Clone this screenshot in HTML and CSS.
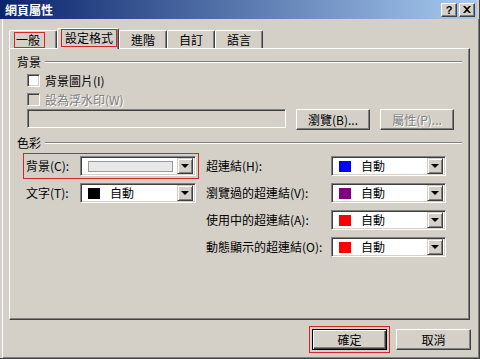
FILE: index.html
```html
<!DOCTYPE html>
<html lang="zh-Hant">
<head>
    <meta charset="UTF-8">
    <title>網頁屬性</title>
    <link rel="stylesheet" href="styles.css">
</head>
<body>
    <div class="window">
        <div class="titlebar">
            <span class="title">網頁屬性</span>
            <div class="caption-buttons">
                <span class="caption-btn">?</span>
                <span class="caption-btn">
                    <svg width="8" height="7" viewBox="0 0 8 7"><path d="M0 0h2l2 2 2-2h2L5 3.5 8 7H6L4 5 2 7H0l3-3.5z" fill="#000"/></svg>
                </span>
            </div>
        </div>

        <div class="frame">
            <!-- Tabs -->
            <div class="tabs">
                <div class="tab tab-first"><span class="mark">一般</span></div>
                <div class="tab active"><span class="mark">設定格式</span></div>
                <div class="tab">進階</div>
                <div class="tab">自訂</div>
                <div class="tab">語言</div>
            </div>

            <div class="panel">
                <div class="group-title"><span>背景</span><span class="rule"></span></div>
                <div class="check"><span class="box"></span>背景圖片(I)</div>
                <div class="check disabled"><span class="box"></span>設為浮水印(W)</div>
                <div class="file-row">
                    <div class="field"></div>
                    <span class="btn">瀏覽(B)...</span>
                    <span class="btn disabled">屬性(P)...</span>
                </div>

                <div class="group-title"><span>色彩</span><span class="rule"></span></div>
                <div class="colors">
                    <div class="col col-left">
                        <div class="row marked">
                            <span class="label">背景(C):</span>
                            <div class="combo"><span class="bar"></span><span class="drop"></span></div>
                        </div>
                        <div class="row">
                            <span class="label">文字(T):</span>
                            <div class="combo"><span class="swatch black"></span><span class="value">自動</span><span class="drop"></span></div>
                        </div>
                    </div>
                    <div class="col col-right">
                        <div class="row">
                            <span class="label">超連結(H):</span>
                            <div class="combo"><span class="swatch blue"></span><span class="value">自動</span><span class="drop"></span></div>
                        </div>
                        <div class="row">
                            <span class="label">瀏覽過的超連結(V):</span>
                            <div class="combo"><span class="swatch purple"></span><span class="value">自動</span><span class="drop"></span></div>
                        </div>
                        <div class="row">
                            <span class="label">使用中的超連結(A):</span>
                            <div class="combo"><span class="swatch red"></span><span class="value">自動</span><span class="drop"></span></div>
                        </div>
                        <div class="row">
                            <span class="label">動態顯示的超連結(O):</span>
                            <div class="combo"><span class="swatch red"></span><span class="value">自動</span><span class="drop"></span></div>
                        </div>
                    </div>
                </div>
            </div>

            <div class="actions">
                <span class="btn default marked">確定</span>
                <span class="btn">取消</span>
            </div>
        </div>
    </div>
</body>
</html>
```

FILE: styles.css
```css
body {
    margin: 0;
    font-family: "Noto Sans CJK TC", sans-serif;
    font-size: 12px;
    line-height: 14px;
    color: #000;
    background-color: #d4d0c8;
}

.window {
    width: 480px;
    height: 359px;
    box-sizing: border-box;
    display: flex;
    flex-direction: column;
    border-right: 1px solid #404040;
    border-bottom: 1px solid #404040;
}

/* Title bar */
.titlebar {
    height: 19px;
    margin-right: 2px;
    flex-shrink: 0;
    display: flex;
    align-items: center;
    justify-content: space-between;
    padding: 0 2px 0 5px;
    background: linear-gradient(to right, #0a246a, #a6caf0);
    color: #fff;
    font-weight: bold;
}

.caption-buttons {
    display: flex;
    gap: 2px;
}

.caption-btn {
    width: 16px;
    height: 14px;
    box-sizing: border-box;
    display: flex;
    align-items: center;
    justify-content: center;
    background-color: #d4d0c8;
    border: 1px solid;
    border-color: #fff #404040 #404040 #fff;
    box-shadow: inset -1px -1px #808080;
    color: #000;
    font-family: "Liberation Sans", sans-serif;
    font-size: 11px;
    font-weight: bold;
}

.frame {
    flex: 1;
    padding: 0 2px 0 3px;
    box-shadow: inset 2px 0 #d4d0c8, inset 3px 0 #fff, inset -1px -1px #808080;
}

/* Tabs */
.tabs {
    display: flex;
    align-items: flex-end;
    height: 20px;
    margin: 9px 0 0 6px;
}

.tab {
    height: 18px;
    box-sizing: border-box;
    display: flex;
    align-items: center;
    padding: 0 11px;
    border: 1px solid;
    border-color: #fff #404040 transparent #fff;
    border-bottom: none;
    border-radius: 2px 2px 0 0;
    box-shadow: inset -1px 0 #808080;
}

.tab-first {
    padding: 1px 11px 0 4px;
}

.tab.active {
    position: relative;
    z-index: 1;
    height: 21px;
    margin-bottom: -1px;
    padding: 0 1px 2px 3px;
    background-color: #d4d0c8;
}

.mark {
    border: 1px solid #d02828;
    padding: 0 4px 0 1px;
}

.tab.active .mark {
    padding: 1px 3px;
}

/* Panel */
.panel {
    height: 272px;
    box-sizing: border-box;
    margin: 0 7px 0 6px;
    padding: 6px 7px 0 7px;
    border: 1px solid;
    border-color: #fff #404040 #404040 #fff;
    box-shadow: inset -1px -1px #808080;
}

.group-title {
    display: flex;
    align-items: center;
    gap: 4px;
    height: 14px;
}

.rule {
    flex: 1;
    border-top: 1px solid #808080;
    border-bottom: 1px solid #fff;
}

.check {
    display: flex;
    align-items: center;
    gap: 5px;
    height: 13px;
    margin: 5px 0 0 10px;
}

.check.disabled {
    margin-top: 6px;
}

.box {
    width: 13px;
    height: 13px;
    box-sizing: border-box;
    border: 1px solid;
    border-color: #808080 #fff #fff #808080;
    box-shadow: inset 1px 1px #404040, inset -1px -1px #d4d0c8;
    background-color: #fff;
}

.disabled {
    color: #808080;
    text-shadow: 1px 1px #fff;
}

.check.disabled .box {
    background-color: #d4d0c8;
}

.file-row {
    display: flex;
    align-items: flex-start;
    gap: 10px;
    margin: 3px 0 0 10px;
}

.field {
    width: 259px;
    height: 19px;
    box-sizing: border-box;
    border: 1px solid;
    border-color: #808080 #fff #fff #808080;
    box-shadow: inset 1px 1px #404040, inset -1px -1px #d4d0c8;
}

.btn {
    width: 74px;
    height: 21px;
    box-sizing: border-box;
    display: flex;
    align-items: center;
    justify-content: center;
    border: 1px solid;
    border-color: #fff #404040 #404040 #fff;
    box-shadow: inset -1px -1px #808080;
    background-color: #d4d0c8;
}

.file-row .group-title {
    margin-top: 6px;
}

.file-row + .group-title {
    margin-top: 6px;
}

/* Colour rows */
.colors {
    display: flex;
    margin: 6px 0 0 9px;
}

.col {
    display: flex;
    flex-direction: column;
    gap: 7px;
}

.col-right {
    margin-left: 10px;
}

.row {
    display: flex;
    align-items: center;
    height: 20px;
}

.row.marked {
    outline: 1px solid #d02828;
    outline-offset: 2px;
}

.col-left .label {
    width: 54px;
}

.col-right .label {
    width: 125px;
}

.combo {
    width: 116px;
    height: 20px;
    box-sizing: border-box;
    display: flex;
    align-items: center;
    padding: 2px;
    border: 1px solid;
    border-color: #808080 #fff #fff #808080;
    box-shadow: inset 1px 1px #404040, inset -1px -1px #d4d0c8;
    background-color: #fff;
}

.col-right .combo {
    width: 115px;
}

.bar {
    width: 85px;
    height: 11px;
    box-sizing: border-box;
    margin-left: 5px;
    border: 1px solid #9a9a9a;
    background-color: #e8e8e8;
}

.swatch {
    width: 12px;
    height: 11px;
    margin-left: 5px;
}

.black { background-color: #000; }
.blue { background-color: #0000ff; }
.purple { background-color: #800080; }
.red { background-color: #ff0000; }

.value {
    margin-left: 10px;
}

.drop {
    width: 16px;
    height: 16px;
    box-sizing: border-box;
    margin-left: auto;
    display: flex;
    align-items: center;
    justify-content: center;
    border: 1px solid;
    border-color: #d4d0c8 #404040 #404040 #d4d0c8;
    box-shadow: inset 1px 1px #fff, inset -1px -1px #808080;
    background-color: #d4d0c8;
}

.drop::after {
    content: "";
    border-style: solid;
    border-width: 4px 4px 0 4px;
    border-color: #000 transparent transparent transparent;
}

/* Bottom buttons */
.actions {
    display: flex;
    justify-content: flex-end;
    gap: 9px;
    margin: 9px 6px 0 0;
}

.actions .btn {
    width: 75px;
}

.btn.default {
    border: 1px solid #000;
    box-shadow: inset 1px 1px #fff, inset -1px -1px #404040, inset -2px -2px #808080;
}

.btn.marked {
    outline: 1px solid #d02828;
    outline-offset: 2px;
}
```
